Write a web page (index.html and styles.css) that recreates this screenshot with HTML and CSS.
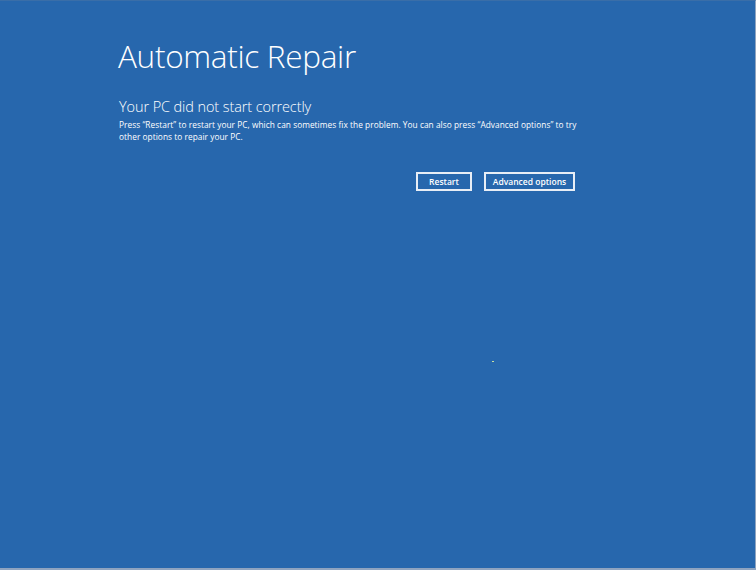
FILE: index.html
```html
<!DOCTYPE html>
<html>
<head>
<meta charset="utf-8">
<link rel="stylesheet" href="styles.css">
</head>
<body>
<div class="screen">
  <div class="content">
    <h1 class="title">Automatic Repair</h1>
    <h2 class="subtitle">Your PC did not start correctly</h2>
    <p class="desc">Press “Restart” to restart your PC, which can sometimes fix the problem. You can also press “Advanced options” to try other options to repair your PC.</p>
    <div class="actions">
      <button class="btn btn-restart">Restart</button>
      <button class="btn btn-adv">Advanced options</button>
    </div>
  </div>
  <span class="dot"></span>
</div>
</body>
</html>
```
FILE: styles.css
```css
html, body {
  margin: 0;
  padding: 0;
  background: #2767ad;
}
.screen {
  position: relative;
  width: 756px;
  height: 570px;
  background: #2767ad;
  box-sizing: border-box;
  border-top: 1px solid #3a6ea8;
  border-right: 1px solid #8fa4c0;
  border-bottom: 2px solid #8fa4c0;
  overflow: hidden;
  font-family: "Open Sans", "Noto Sans", sans-serif;
  color: #ffffff;
}
.content {
  width: 462px;
  padding-left: 118px;
  padding-top: 35px;
}
.title {
  margin: 0;
  font-size: 31.5px;
  font-weight: 300;
  line-height: 40px;
  letter-spacing: -0.3px;
}
.subtitle {
  margin: 21px 0 0 1px;
  font-size: 14.5px;
  font-weight: 300;
  line-height: 20px;
  letter-spacing: -0.1px;
}
.desc {
  margin: 2px 0 0 1px;
  font-size: 8.3px;
  line-height: 12px;
  font-weight: 400;
  letter-spacing: 0.05px;
}
.actions {
  display: flex;
  justify-content: flex-end;
  gap: 12px;
  margin-top: 29px;
  margin-right: 5px;
}
.btn {
  font-family: "Open Sans", "Noto Sans", sans-serif;
  background: transparent;
  color: #ffffff;
  border: 2px solid #e8eef6;
  font-size: 8.5px;
  font-weight: 600;
  height: 19px;
  padding: 0 6px;
  margin: 0;
  line-height: 15px;
}
.btn-restart { width: 56px; }
.btn-adv { width: 91px; }
.dot {
  position: absolute;
  left: 492px;
  top: 360px;
  width: 2px;
  height: 1px;
  background: #c8e0a0;
}
```
